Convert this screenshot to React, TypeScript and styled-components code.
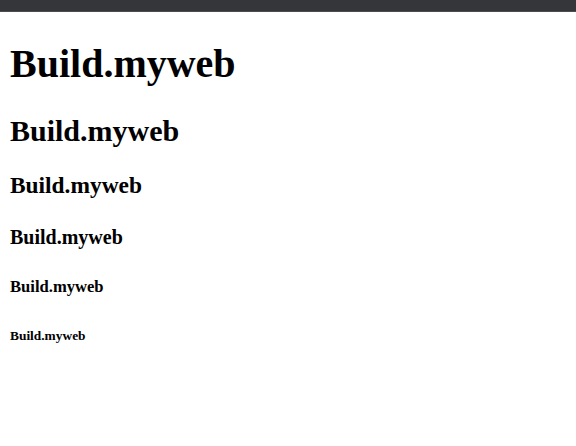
import React from "react";
import styled, { createGlobalStyle } from "styled-components";

const Global = createGlobalStyle`
  html, body { margin: 0; padding: 0; background: #ffffff; }
  body { font-family: "Liberation Serif", "Times New Roman", serif; color: #000; }
`;

const TopBar = styled.div`
  height: 11px;
  background: #35363a;
  border-bottom: 1px solid #4b4c50;
`;

const Content = styled.main`
  padding: 1px 10px 0;
  display: flow-root;
`;

const sizes: Record<number, [number, number]> = {
  1: [40, 26.8],
  2: [30, 24.9],
  3: [23.4, 23.4],
  4: [20, 26.6],
  5: [16.6, 27.7],
  6: [13.4, 31.2],
};

const Heading = styled.div<{ $level: number }>`
  font-weight: bold;
  font-size: ${(p) => sizes[p.$level][0]}px;
  margin: ${(p) => sizes[p.$level][1]}px 0;
`;

export default function App() {
  const levels = [1, 2, 3, 4, 5, 6];
  return (
    <>
      <Global />
      <TopBar />
      <Content>
        {levels.map((l) => (
          <Heading key={l} as={`h${l}` as any} $level={l}>
            Build.myweb
          </Heading>
        ))}
      </Content>
    </>
  );
}
